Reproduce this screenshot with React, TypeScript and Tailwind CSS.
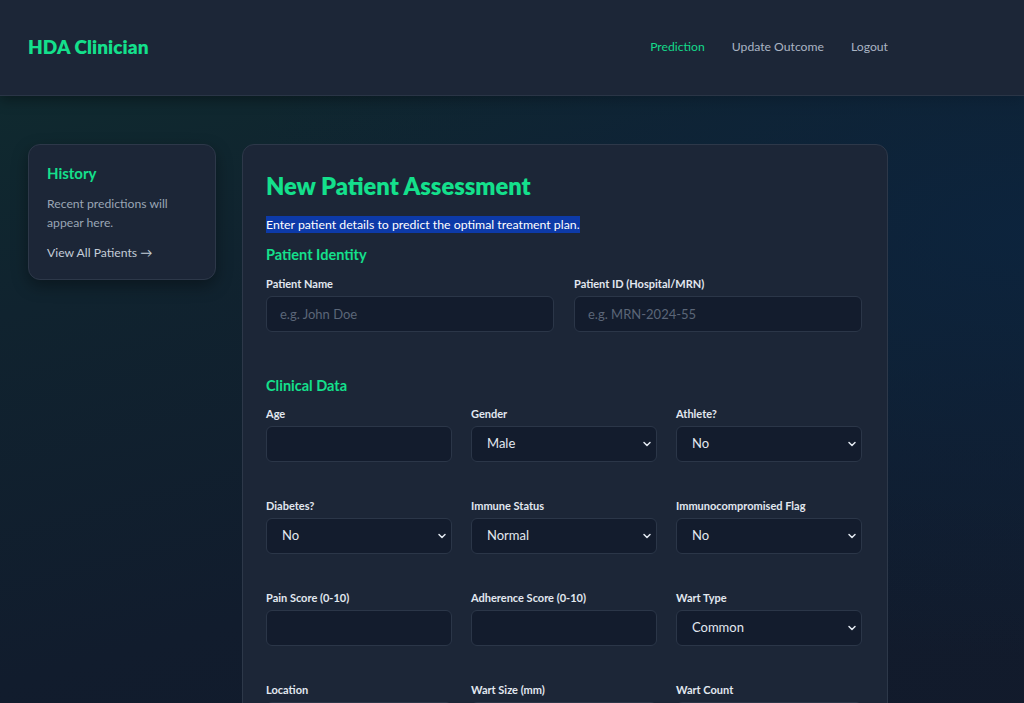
import { ChevronDown } from "lucide-react";

const font = { fontFamily: "Lato, 'Open Sans', sans-serif" };

const Label = ({ children }: { children: string }) => (
  <label className="block text-[11px] font-bold text-[#e2e8f0] mb-[5px] leading-[14px]">{children}</label>
);

const TextField = ({ label, placeholder }: { label: string; placeholder?: string }) => (
  <div>
    <Label>{label}</Label>
    <input
      placeholder={placeholder}
      className="w-full h-[36px] rounded-md bg-[#131c2d] border border-[#2b3648] px-[13px] text-[13px] text-[#e2e8f0] placeholder:text-[#5b6678] outline-none"
      style={font}
    />
  </div>
);

const SelectField = ({ label, options }: { label: string; options: string[] }) => (
  <div>
    <Label>{label}</Label>
    <div className="relative">
      <select
        className="w-full h-[36px] appearance-none rounded-md bg-[#131c2d] border border-[#2b3648] pl-[15px] pr-8 text-[13px] text-[#e2e8f0] outline-none"
        style={font}
      >
        {options.map((o) => (
          <option key={o}>{o}</option>
        ))}
      </select>
      <ChevronDown
        className="absolute right-[4px] top-1/2 -translate-y-1/2 w-[12px] h-[12px] text-[#e2e8f0] pointer-events-none"
        strokeWidth={3}
      />
    </div>
  </div>
);

export default function App() {
  return (
    <div
      className="min-h-[703px] bg-[linear-gradient(165deg,#0f2c2f_0%,#10232f_30%,#111c2d_65%,#121a2b_100%)] text-white"
      style={font}
    >
      {/* Header */}
      <header className="h-[96px] bg-[#1c2637] border-b border-[#2a3546] shadow-[0_4px_12px_rgba(0,0,0,0.35)]">
        <div className="w-[860px] ml-[28px] h-full flex items-center justify-between">
          <div className="text-[19px] font-extrabold text-[#14e08c] tracking-[0.1px]">HDA Clinician</div>
          <nav className="flex items-center gap-[27px] text-[12.2px]">
            <a className="text-[#14d98a]">Prediction</a>
            <a className="text-[#aab4c3]">Update Outcome</a>
            <a className="text-[#aab4c3]">Logout</a>
          </nav>
        </div>
      </header>

      {/* Body */}
      <div className="bg-[radial-gradient(ellipse_at_100%_20%,rgba(12,36,62,0.9),transparent_55%)]">
        <div className="flex gap-[26px] items-start ml-[28px] w-[860px] pt-[48px]">
          {/* History */}
          <aside className="w-[188px] rounded-xl bg-[#1c2637] border border-[#2d3849] shadow-[0_6px_16px_rgba(0,0,0,0.35)] px-[18px] pt-[18px] pb-[17px]">
            <h3 className="text-[15px] font-bold text-[#14e08c] leading-[20px]">History</h3>
            <p className="mt-[11px] text-[12.2px] leading-[19px] text-[#9aa5b4]">Recent predictions will appear here.</p>
            <a className="block mt-[11px] text-[12.2px] leading-[19px] text-[#c3ccd8]">View All Patients →</a>
          </aside>

          {/* Main card */}
          <main className="flex-1 rounded-xl bg-[#1c2637] border border-[#2d3849] pl-[23px] pr-[25px] pt-[26px] pb-10">
            <h1 className="text-[23.7px] font-extrabold text-[#14e08c] leading-[30px]">New Patient Assessment</h1>
            <p className="mt-[16px] text-[12.3px] leading-[16px]">
              <span className="bg-[#0d3aa8] text-white py-[1px]">Enter patient details to predict the optimal treatment plan.</span>
            </p>

            <h2 className="mt-[12px] text-[14.5px] font-bold text-[#14e08c] leading-[20px]">Patient Identity</h2>
            <div className="mt-[12px] grid grid-cols-2 gap-x-[20px]">
              <TextField label="Patient Name" placeholder="e.g. John Doe" />
              <TextField label="Patient ID (Hospital/MRN)" placeholder="e.g. MRN-2024-55" />
            </div>

            <h2 className="mt-[44px] text-[14.5px] font-bold text-[#14e08c] leading-[20px]">Clinical Data</h2>
            <div className="mt-[11px] grid grid-cols-3 gap-x-[19px] gap-y-[37px]">
              <TextField label="Age" />
              <SelectField label="Gender" options={["Male", "Female"]} />
              <SelectField label="Athlete?" options={["No", "Yes"]} />
              <SelectField label="Diabetes?" options={["No", "Yes"]} />
              <SelectField label="Immune Status" options={["Normal", "Compromised"]} />
              <SelectField label="Immunocompromised Flag" options={["No", "Yes"]} />
              <TextField label="Pain Score (0-10)" />
              <TextField label="Adherence Score (0-10)" />
              <SelectField label="Wart Type" options={["Common", "Plantar", "Flat"]} />
              <TextField label="Location" />
              <TextField label="Wart Size (mm)" />
              <TextField label="Wart Count" />
            </div>
          </main>
        </div>
      </div>
    </div>
  );
}
